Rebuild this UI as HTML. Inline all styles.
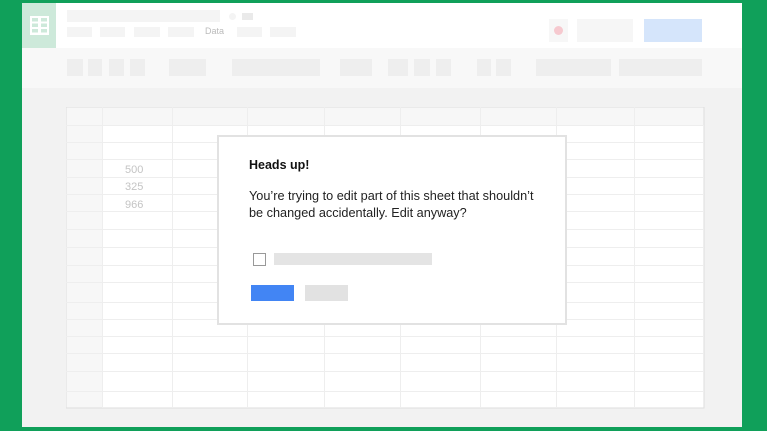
<!DOCTYPE html>
<html><head><meta charset="utf-8"><style>
*{margin:0;padding:0;box-sizing:border-box}
body{width:767px;height:431px;background:#10a05a;position:relative;overflow:hidden;font-family:"Liberation Sans",sans-serif}
.a{position:absolute}
.ph{position:absolute;background:#f4f4f4}
.tb{position:absolute;background:#eeeeee;top:59px;height:17px}
</style></head><body>
<div class="a" style="left:22px;top:3px;width:720px;height:424px;background:#f2f2f2"></div>
<div class="a" style="left:22px;top:3px;width:720px;height:45px;background:#fff"></div>
<div class="a" style="left:22px;top:3px;width:34px;height:45px;background:#cde9da"></div>
<svg class="a" style="left:30px;top:16px" width="19" height="19" viewBox="0 0 19 19"><rect width="19" height="19" fill="#fff"/><g fill="#cde9da"><rect x="2" y="2" width="6" height="3.5"/><rect x="11" y="2" width="6" height="3.5"/><rect x="2" y="7.5" width="6" height="3.5"/><rect x="11" y="7.5" width="6" height="3.5"/><rect x="2" y="13" width="6" height="3.5"/><rect x="11" y="13" width="6" height="3.5"/></g></svg>
<div class="ph" style="left:67px;top:10px;width:153px;height:12px"></div>
<div class="a" style="left:229px;top:13px;width:7px;height:7px;border-radius:50%;background:#f4f4f4"></div>
<div class="a" style="left:242px;top:13px;width:11px;height:7px;background:#eaeaea"></div>
<div class="ph" style="left:67px;top:27px;width:25px;height:10px"></div>
<div class="ph" style="left:100px;top:27px;width:25px;height:10px"></div>
<div class="ph" style="left:134px;top:27px;width:26px;height:10px"></div>
<div class="ph" style="left:168px;top:27px;width:26px;height:10px"></div>
<div class="a" style="left:205px;top:26px;font-size:9px;color:#bbb">Data</div>
<div class="ph" style="left:237px;top:27px;width:25px;height:10px"></div>
<div class="ph" style="left:270px;top:27px;width:26px;height:10px"></div>
<div class="a" style="left:549px;top:19px;width:19px;height:23px;background:#f7f7f7"></div>
<div class="a" style="left:554px;top:26px;width:9px;height:9px;border-radius:50%;background:#f6c9cf"></div>
<div class="a" style="left:577px;top:19px;width:56px;height:23px;background:#f6f6f6"></div>
<div class="a" style="left:644px;top:19px;width:58px;height:23px;background:#d5e5fb"></div>
<div class="a" style="left:22px;top:48px;width:720px;height:40px;background:#f8f8f8"></div>
<div class="tb" style="left:67px;width:16px"></div><div class="tb" style="left:88px;width:14px"></div><div class="tb" style="left:109px;width:15px"></div><div class="tb" style="left:130px;width:15px"></div>
<div class="tb" style="left:169px;width:37px"></div><div class="tb" style="left:232px;width:88px"></div><div class="tb" style="left:340px;width:32px"></div>
<div class="tb" style="left:388px;width:20px"></div><div class="tb" style="left:414px;width:16px"></div><div class="tb" style="left:436px;width:15px"></div>
<div class="tb" style="left:477px;width:14px"></div><div class="tb" style="left:496px;width:15px"></div>
<div class="tb" style="left:536px;width:75px"></div><div class="tb" style="left:619px;width:83px"></div>
<svg class="a" style="left:66px;top:107px" width="639" height="302" viewBox="66 107 639 302">
<rect x="66" y="107" width="638" height="301" fill="#fff" stroke="#dedede"/>
<rect x="66.5" y="107.5" width="36" height="300" fill="#f7f7f7"/>
<rect x="66.5" y="107.5" width="637" height="18" fill="#f7f7f7"/>
<g stroke="#eeeeee" stroke-width="1">
<line x1="102.5" y1="107" x2="102.5" y2="408"/><line x1="172.5" y1="107" x2="172.5" y2="408"/><line x1="247.5" y1="107" x2="247.5" y2="408"/><line x1="324.5" y1="107" x2="324.5" y2="408"/><line x1="400.5" y1="107" x2="400.5" y2="408"/><line x1="480.5" y1="107" x2="480.5" y2="408"/><line x1="556.5" y1="107" x2="556.5" y2="408"/><line x1="634.5" y1="107" x2="634.5" y2="408"/>
<line x1="66" y1="125.5" x2="704" y2="125.5"/><line x1="66" y1="142.5" x2="704" y2="142.5"/><line x1="66" y1="159.5" x2="704" y2="159.5"/><line x1="66" y1="177.5" x2="704" y2="177.5"/><line x1="66" y1="194.5" x2="704" y2="194.5"/><line x1="66" y1="211.5" x2="704" y2="211.5"/><line x1="66" y1="229.5" x2="704" y2="229.5"/><line x1="66" y1="247.5" x2="704" y2="247.5"/><line x1="66" y1="265.5" x2="704" y2="265.5"/><line x1="66" y1="282.5" x2="704" y2="282.5"/><line x1="66" y1="302.5" x2="704" y2="302.5"/><line x1="66" y1="319.5" x2="704" y2="319.5"/><line x1="66" y1="336.5" x2="704" y2="336.5"/><line x1="66" y1="353.5" x2="704" y2="353.5"/><line x1="66" y1="371.5" x2="704" y2="371.5"/><line x1="66" y1="391.5" x2="704" y2="391.5"/>
</g>
<g font-family="Liberation Sans" font-size="11" fill="#c4c4c4"><text x="125" y="173">500</text><text x="125" y="190">325</text><text x="125" y="208">966</text></g>
</svg>
<div class="a" style="left:217px;top:135px;width:350px;height:190px;background:#fff;border:2px solid #e2e2e2"></div>
<div class="a" style="left:249px;top:158px;font-size:12.5px;font-weight:bold;color:#111">Heads up!</div>
<div class="a" style="left:249px;top:188px;font-size:12.7px;line-height:17px;color:#222;width:310px">You’re trying to edit part of this sheet that shouldn’t<br>be changed accidentally. Edit anyway?</div>
<div class="a" style="left:253px;top:253px;width:13px;height:13px;border:1px solid #999;background:#fff"></div>
<div class="a" style="left:274px;top:253px;width:158px;height:12px;background:#e4e4e4"></div>
<div class="a" style="left:251px;top:285px;width:43px;height:16px;background:#4285f4"></div>
<div class="a" style="left:305px;top:285px;width:43px;height:16px;background:#e2e2e2"></div>
</body></html>
